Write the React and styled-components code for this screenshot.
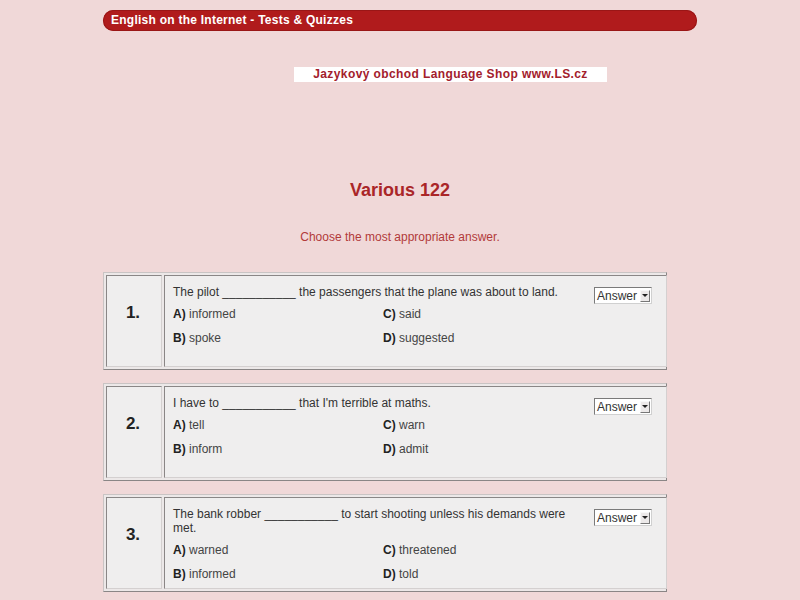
import styled, { createGlobalStyle } from "styled-components";

const Global = createGlobalStyle`
  body {
    margin: 0;
    background: #f0d8d8;
    font-family: "Liberation Sans", Arial, sans-serif;
    font-size: 12px;
    color: #333;
  }
`;

const Page = styled.div`
  width: 594px;
  margin: 0 auto;
  padding-top: 10px;
`;

const TopBar = styled.div`
  height: 21px;
  border-radius: 11px;
  background: #b01b1c;
  box-shadow: inset 0 0 0 1px #9a1616;
  color: #fff;
  font-weight: bold;
  font-size: 12px;
  letter-spacing: 0.25px;
  line-height: 21px;
  padding-left: 8px;
`;

const ShopBanner = styled.div`
  width: 313px;
  margin: 36px 0 0 191px;
  height: 15px;
  background: #fff;
  color: #a3202c;
  font-weight: bold;
  font-size: 12px;
  letter-spacing: 0.4px;
  line-height: 15px;
  text-align: center;
`;

const Title = styled.h1`
  margin: 97px 0 0;
  text-align: center;
  color: #aa2628;
  font-size: 18px;
  line-height: 22px;
`;

const Subtitle = styled.p`
  margin: 29px 0 0;
  text-align: center;
  color: #b23a3a;
  font-size: 12px;
  line-height: 14px;
`;

const Questions = styled.div`
  margin-top: 28px;
  display: flex;
  flex-direction: column;
  gap: 13px;
`;

const QTable = styled.div`
  width: 564px;
  height: 98px;
  box-sizing: border-box;
  border: 1px solid;
  border-color: #c9c4c4 #8a8686 #8a8686 #c9c4c4;
  padding: 2px;
  display: grid;
  grid-template-columns: 56px 1fr;
  gap: 2px;
  background: #ece8e8;
`;

const Cell = styled.div`
  box-sizing: border-box;
  border: 1px solid;
  border-color: #8a8686 #d4d0d0 #d4d0d0 #8a8686;
  background: #efeeee;
`;

const NumCell = styled(Cell)`
  display: flex;
  align-items: center;
  justify-content: center;
  padding: 0 2px 16px 0;
  font-weight: bold;
  font-size: 17px;
  color: #222;
`;

const Body = styled(Cell)`
  padding: 9px 14px 0 8px;
`;

const Head = styled.div`
  display: flex;
  align-items: flex-start;
  gap: 10px;
  margin-bottom: 3px;
`;

const Question = styled.div`
  width: 411px;
  line-height: 14px;
  color: #333;
`;

const Select = styled.div`
  margin: 2px 0 -5px;
  width: 58px;
  height: 17px;
  box-sizing: border-box;
  border: 1px solid;
  border-color: #7a7a7a #d0d0d0 #d0d0d0 #7a7a7a;
  background: #fff;
  display: flex;
  align-items: center;
  justify-content: space-between;
  padding: 0 1px 0 2px;
  font-size: 12px;
  color: #333;
`;

const Arrow = styled.span`
  width: 10px;
  height: 12px;
  box-sizing: border-box;
  background: #ece9e9;
  border: 1px solid;
  border-color: #f8f8f8 #777 #777 #f8f8f8;
  display: flex;
  align-items: center;
  justify-content: center;
  &::after {
    content: "";
    border-left: 3px solid transparent;
    border-right: 3px solid transparent;
    border-top: 3px solid #222;
  }
`;

const Options = styled.div`
  display: grid;
  grid-template-columns: 210px 1fr;
  grid-auto-rows: 24px;
  align-items: center;
`;

const Option = styled.div`
  color: #444;
  b {
    color: #222;
  }
`;

const data = [
  {
    n: "1.",
    q: "The pilot ___________ the passengers that the plane was about to land.",
    opts: ["informed", "spoke", "said", "suggested"],
  },
  {
    n: "2.",
    q: "I have to ___________ that I'm terrible at maths.",
    opts: ["tell", "inform", "warn", "admit"],
  },
  {
    n: "3.",
    q: "The bank robber ___________ to start shooting unless his demands were met.",
    opts: ["warned", "informed", "threatened", "told"],
  },
];

// grid fills row by row: A, C, B, D
const layout = [0, 2, 1, 3];
const letters = ["A", "B", "C", "D"];

export default function App() {
  return (
    <>
      <Global />
      <Page>
        <TopBar>English on the Internet - Tests &amp; Quizzes</TopBar>
        <ShopBanner>Jazykový obchod Language Shop www.LS.cz</ShopBanner>
        <Title>Various 122</Title>
        <Subtitle>Choose the most appropriate answer.</Subtitle>
        <Questions>
          {data.map((d) => (
            <QTable key={d.n}>
              <NumCell>{d.n}</NumCell>
              <Body>
                <Head>
                  <Question>{d.q}</Question>
                  <Select>
                    Answer
                    <Arrow />
                  </Select>
                </Head>
                <Options>
                  {layout.map((i) => (
                    <Option key={i}>
                      <b>{letters[i]})</b> {d.opts[i]}
                    </Option>
                  ))}
                </Options>
              </Body>
            </QTable>
          ))}
        </Questions>
      </Page>
    </>
  );
}
